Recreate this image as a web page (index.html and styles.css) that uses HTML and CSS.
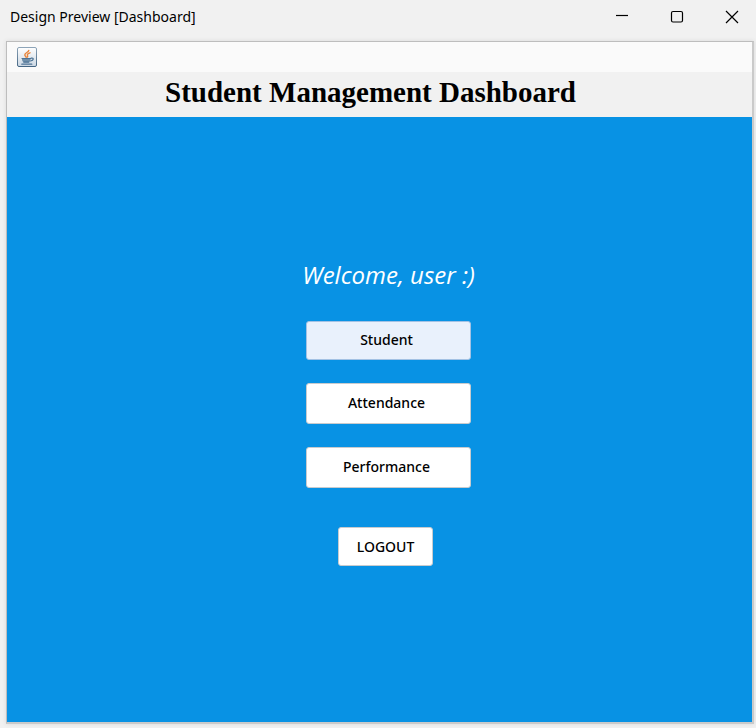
FILE: index.html
```html
<!DOCTYPE html>
<html lang="en">
<head>
<meta charset="utf-8">
<meta name="viewport" content="width=device-width, initial-scale=1">
<title>Design Preview [Dashboard]</title>
<link rel="stylesheet" href="styles.css">
</head>
<body>
<div class="window">
  <header class="titlebar">
    <span class="titlebar-text">Design Preview [Dashboard]</span>
    <div class="window-controls">
      <button class="control" type="button" aria-label="Minimize"><svg width="14" height="14" viewBox="0 0 14 14"><path d="M1 5.500h12"/></svg></button>
      <button class="control" type="button" aria-label="Maximize"><svg width="14" height="14" viewBox="0 0 14 14"><rect x="1.5" y="1.500" width="11" height="10.500" rx="1.5"/></svg></button>
      <button class="control" type="button" aria-label="Close"><svg width="14" height="14" viewBox="0 0 14 14"><path d="M1 1l12 12M13 1L1 13"/></svg></button>
    </div>
  </header>
  <main class="frame">
    <div class="menubar">
      <button class="java" type="button" aria-label="Java menu">
        <svg width="20" height="20" viewBox="0 0 20 20">
          <defs>
            <linearGradient id="edge" x2="0" y2="1"><stop offset="0" stop-color="#8da4b8"/><stop offset="1" stop-color="#456684"/></linearGradient>
            <linearGradient id="face" x2="0" y2="1"><stop offset="0" stop-color="#ffffff"/><stop offset="1" stop-color="#cbd7e3"/></linearGradient>
          </defs>
          <rect x=".5" y=".5" width="19" height="19" rx="1.5" fill="url(#face)" stroke="url(#edge)"/>
          <path d="M5 11.300h8.600v1.200c0 1.600-1 2.700-2.400 2.700H7.400C6 15.200 5 14.100 5 12.500z" fill="#6f8faa"/>
          <g fill="none" stroke-linecap="round">
            <path d="M11.800 3.400C11.600 5.200 7.600 6 7.800 8c.1 1 1.300 1.400 1.200 2.200M13 5.800C11 6.400 9.900 7.300 10.500 8.500c.4.700.3 1.300-.4 1.700" stroke="#e8843a" stroke-width="1.400"/>
            <path d="M5 11.500h8.600M14.200 11.200c2.800-.6 2.800 2.200-.6 2.800M6.800 15.200h5M4.800 17.200h10" stroke="#4d7395" stroke-width="1.200"/>
          </g>
        </svg>
      </button>
    </div>
    <h1 class="heading">Student Management Dashboard</h1>
    <section class="panel">
      <p class="welcome">Welcome, user :)</p>
      <nav class="actions">
        <button class="btn btn-active" type="button">Student</button>
        <button class="btn" type="button">Attendance</button>
        <button class="btn" type="button">Performance</button>
      </nav>
      <button class="btn btn-logout" type="button">LOGOUT</button>
    </section>
  </main>
</div>
</body>
</html>
```
FILE: styles.css
```css
* {
  box-sizing: border-box;
}

body {
  margin: 0;
  background: #f1f1f1;
  color: #000;
  font-family: "Noto Sans", "Open Sans", sans-serif;
}

.window {
  display: flex;
  flex-direction: column;
  min-height: 100vh;
  padding: 0 2px 4px 6px;
}

.titlebar {
  display: flex;
  align-items: center;
  justify-content: space-between;
  height: 41px;
  padding: 0 0 8px 4px;
}

.titlebar-text {
  font-family: "Noto Sans", sans-serif;
  font-size: 14px;
  line-height: 20px;
}

.window-controls {
  display: flex;
}

.control {
  display: grid;
  place-items: center;
  width: 55px;
  height: 32px;
  padding: 0;
  border: 0;
  background: none;
}

.control:last-child {
  width: 44px;
  margin-left: 6px;
}

.control svg {
  fill: none;
  stroke: #000;
  stroke-width: 1.2;
}

.frame {
  flex: 1;
  display: flex;
  flex-direction: column;
  border: 1px solid #bdbdbd;
  border-right: 2px solid #cacaca;
  border-bottom: 2px solid #cacaca;
  box-shadow: 0 0 4px #d8d8d8;
}

.menubar {
  display: flex;
  align-items: center;
  height: 30px;
  padding-left: 10px;
  background: #fafafa;
}

.java {
  display: flex;
  padding: 0;
  border: 0;
  background: none;
}

.heading {
  height: 45px;
  margin: 0;
  padding-right: 18px;
  font-family: "Liberation Serif", serif;
  font-size: 29px;
  line-height: 40px;
  text-align: center;
}

.panel {
  flex: 1;
  display: flex;
  flex-direction: column;
  align-items: center;
  padding: 142px 0 40px 18px;
  background: #0892e4;
}

.welcome {
  margin: 0 0 30px;
  color: #fff;
  font-family: "Open Sans", sans-serif;
  font-size: 24px;
  font-style: italic;
  line-height: 32px;
}

.actions {
  display: flex;
  flex-direction: column;
  gap: 23px;
  margin-bottom: 39px;
}

.btn {
  width: 165px;
  height: 41px;
  padding: 0 4px 2px 0;
  border: 1px solid #c8cbce;
  border-radius: 3px;
  background: #fff;
  color: #000;
  font-family: "Noto Sans", sans-serif;
  font-size: 14px;
  font-weight: 500;
  line-height: 20px;
}

.btn-active {
  height: 39px;
  border-color: #a3c2e4;
  background: #e9f1fc;
}

.btn-logout {
  width: 95px;
  height: 39px;
  padding: 0;
  margin-right: 6px;
}
```
